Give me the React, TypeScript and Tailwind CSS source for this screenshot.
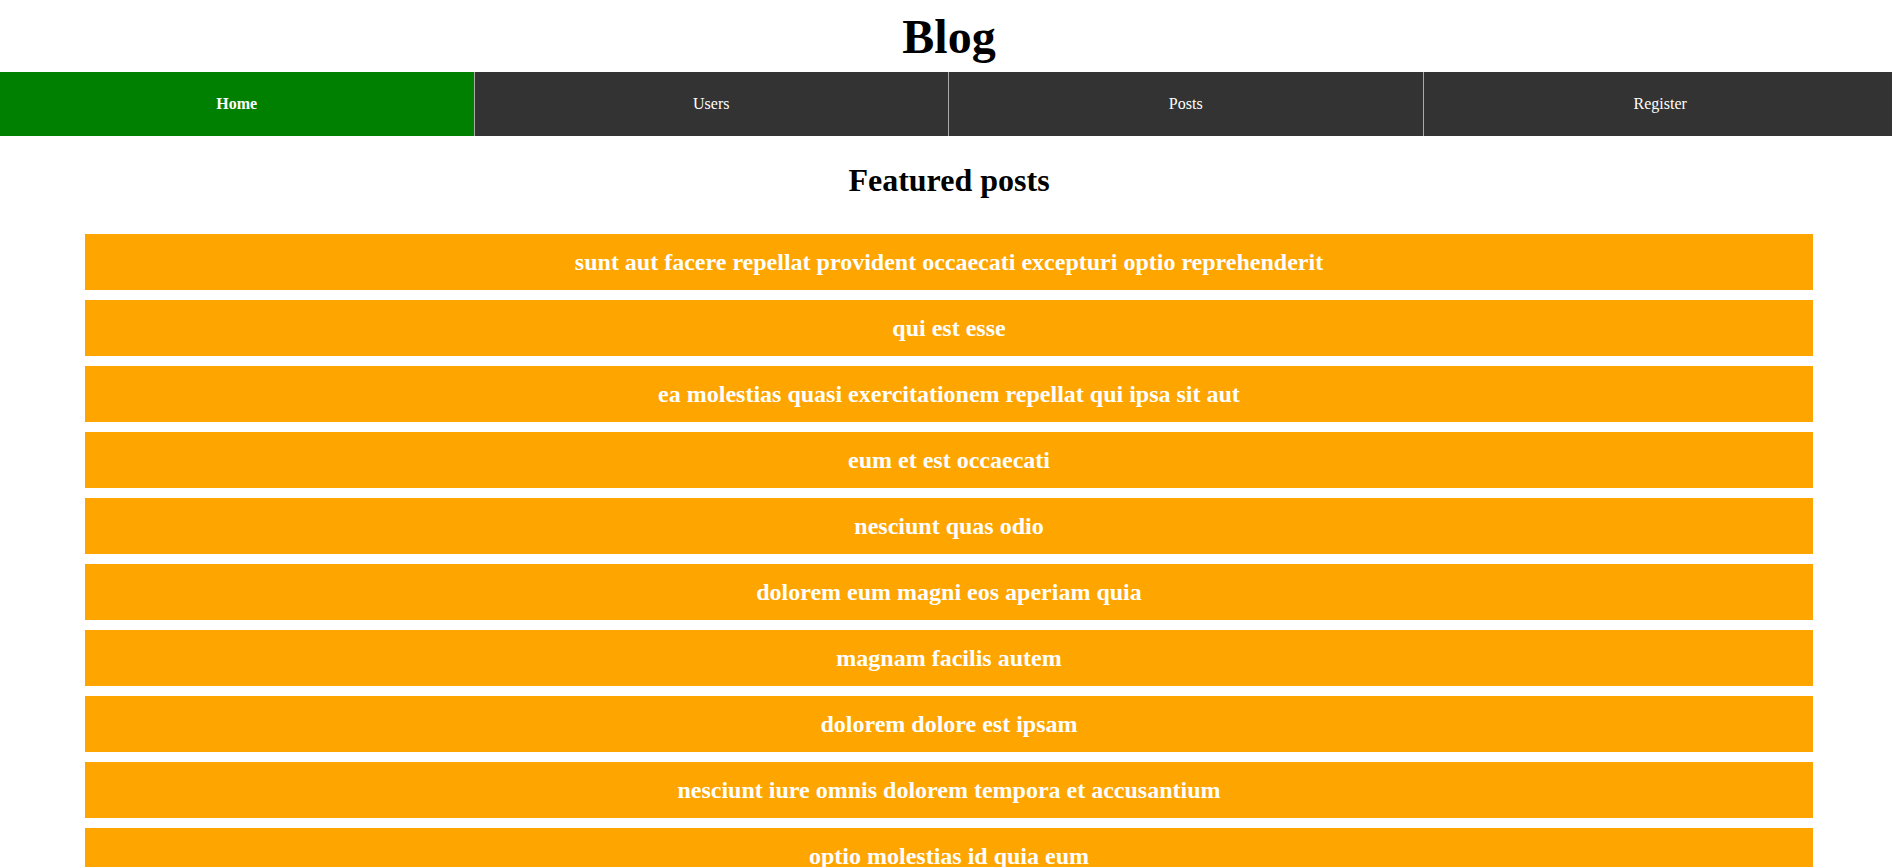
import React from "react";

const navItems = [
  { label: "Home", active: true },
  { label: "Users", active: false },
  { label: "Posts", active: false },
  { label: "Register", active: false },
];

const posts = [
  "sunt aut facere repellat provident occaecati excepturi optio reprehenderit",
  "qui est esse",
  "ea molestias quasi exercitationem repellat qui ipsa sit aut",
  "eum et est occaecati",
  "nesciunt quas odio",
  "dolorem eum magni eos aperiam quia",
  "magnam facilis autem",
  "dolorem dolore est ipsam",
  "nesciunt iure omnis dolorem tempora et accusantium",
  "optio molestias id quia eum",
];

const App = () => {
  return (
    <div className="w-full overflow-x-hidden bg-white font-['Liberation_Serif',serif] text-black">
      <div className="w-[1898px]">
        <h1 className="flex h-[72px] items-center justify-center text-[48px] font-bold leading-[normal]">
          Blog
        </h1>

        <nav className="grid grid-cols-4">
          {navItems.map((item) => (
            <a
              key={item.label}
              href="#"
              className={
                item.active
                  ? "flex h-16 items-center justify-center border-r border-[#aaa] bg-[#008000] text-base font-bold text-white"
                  : "flex h-16 items-center justify-center border-r border-[#aaa] bg-[#333] text-base text-white"
              }
            >
              {item.label}
            </a>
          ))}
        </nav>

        <h2 className="pt-[26px] text-center text-[32px] font-bold leading-[normal]">
          Featured posts
        </h2>

        <ul className="mx-[85px] mt-[35px] flex flex-col gap-[10px]">
          {posts.map((title) => (
            <li
              key={title}
              className="flex h-14 items-center justify-center bg-[#ffa500] text-2xl font-bold leading-[normal] text-white"
            >
              {title}
            </li>
          ))}
        </ul>
      </div>
    </div>
  );
};

export default App;
